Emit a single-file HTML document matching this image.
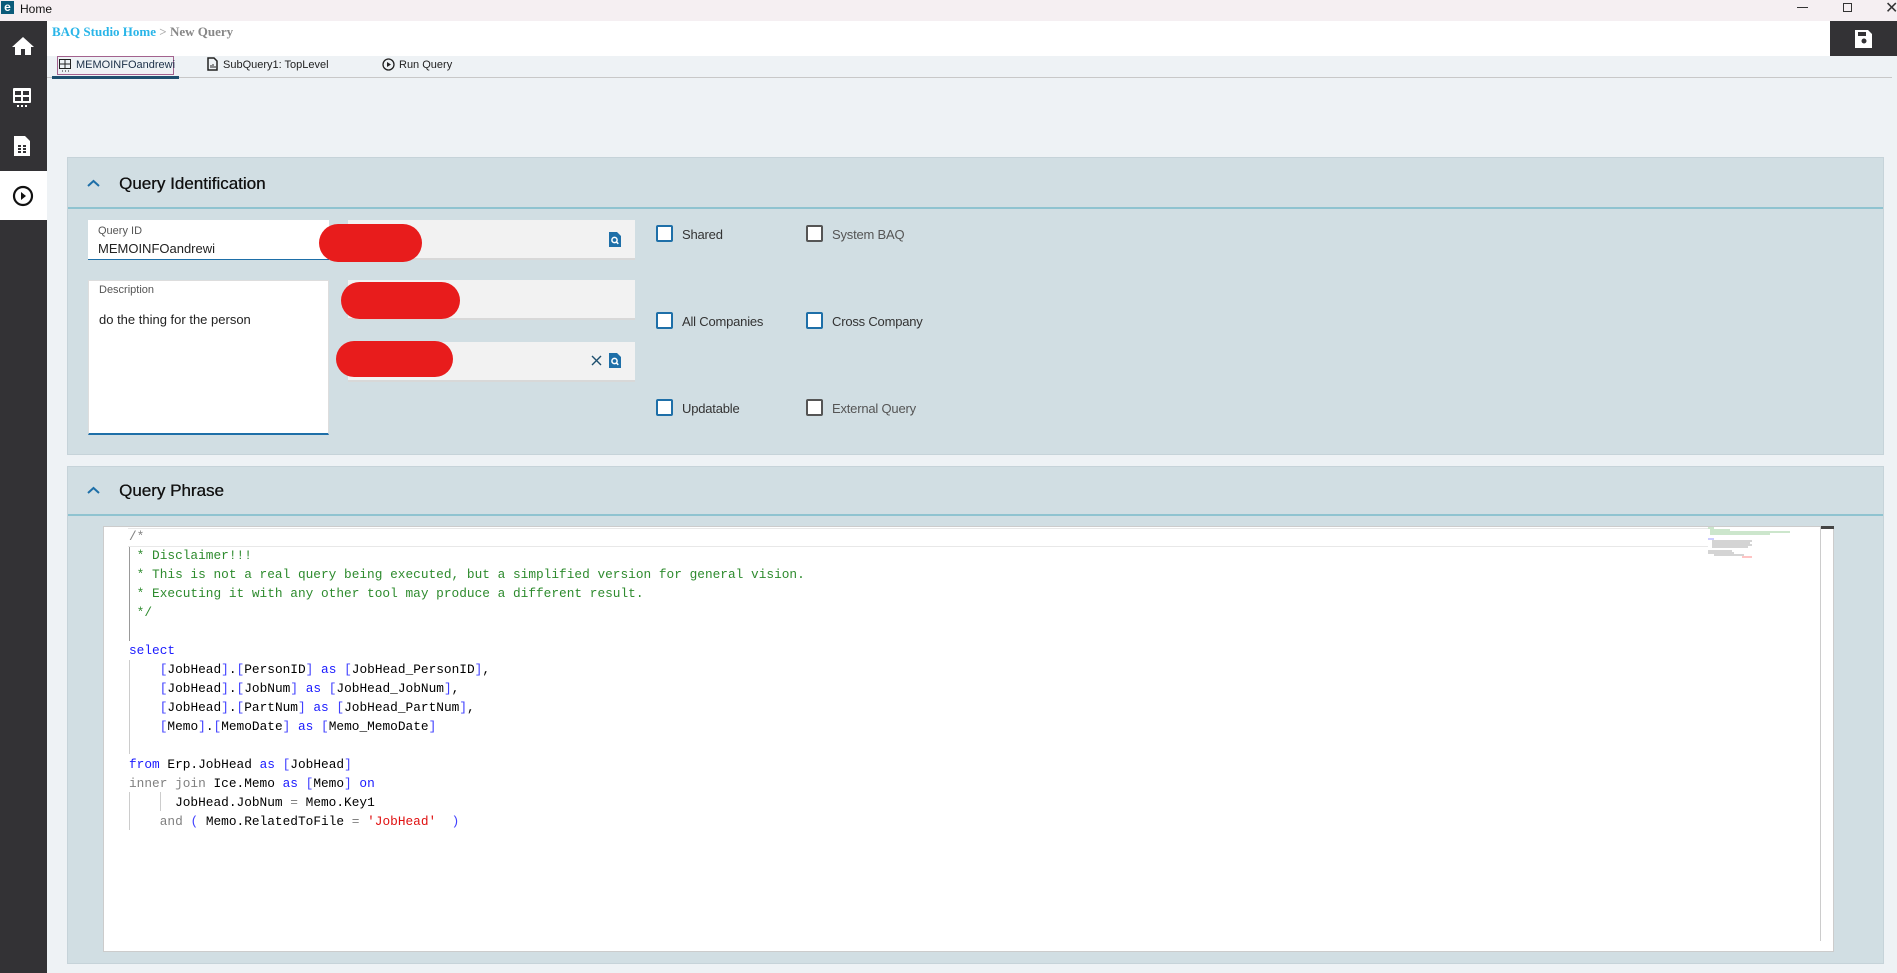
<!DOCTYPE html>
<html><head><meta charset="utf-8"><style>
*{box-sizing:border-box;margin:0;padding:0}
body{width:1897px;height:973px;overflow:hidden;background:#eef2f5;font-family:"Liberation Sans",sans-serif;position:relative}
.abs{position:absolute}
.tb{left:0;top:0;width:1897px;height:21px;background:#f5eff2}
.side{left:0;top:21px;width:47px;height:952px;background:#333235}
.code{font-family:"Liberation Mono",monospace;font-size:12.8px;white-space:pre;line-height:19px}
.cm{color:#2e8b2e}.kw{color:#1a1aff}.gr{color:#808080}.br{color:#4040ff}.st{color:#e01010}
.sec{background:#d1dee3;border:1px solid #c6d3d9}
.hdr{border-bottom:2px solid #8fc3d0}
.fld{background:#f2f2f2;border-bottom:2px solid #d8d8d8}
.cb{width:17px;height:17px;border:2px solid #1e6fa8;border-radius:2px;background:#fff}
.cbg{border-color:#555}
.lbl{font-size:13px;color:#333;letter-spacing:-0.2px}
.red{background:#e81c1c;border-radius:22px}
.ttl{font-size:17px;color:#111;text-shadow:0.3px 0 0 #111}
</style></head><body>
<div class="abs tb"></div>
<div class="abs" style="left:1px;top:1px;width:13px;height:13px;background:#0a5b7a;color:#fff;font-size:12px;font-weight:bold;line-height:12px;text-align:center">e</div>
<div class="abs" style="left:20px;top:2px;font-size:12px;color:#111">Home</div>
<div class="abs" style="left:1797px;top:7px;width:11px;height:1px;background:#333"></div>
<div class="abs" style="left:1843px;top:3px;width:9px;height:9px;border:1px solid #333"></div>
<div class="abs" style="left:1885px;top:-2px;font-size:16px;color:#333">✕</div>
<div class="abs side"></div>
<svg class="abs" style="left:11px;top:36px" width="24" height="20" viewBox="0 0 24 20"><path d="M12 1L1 11h3v8h6v-6h4v6h6v-8h3z" fill="#fff"/></svg>
<svg class="abs" style="left:12px;top:87px" width="22" height="22" viewBox="0 0 22 22"><rect x="1" y="1" width="18" height="15" rx="1" fill="#fff"/><rect x="3" y="4" width="6" height="4" fill="#333235"/><rect x="11" y="4" width="6" height="4" fill="#333235"/><rect x="3" y="10" width="6" height="4" fill="#333235"/><rect x="11" y="10" width="6" height="4" fill="#333235"/><rect x="5" y="18" width="2" height="2" fill="#fff"/><rect x="9" y="18" width="2" height="2" fill="#fff"/><rect x="13" y="18" width="2" height="2" fill="#fff"/></svg>
<svg class="abs" style="left:13px;top:135px" width="18" height="22" viewBox="0 0 18 22"><path d="M1 1h11l5 5v15H1z" fill="#fff"/><g fill="#333235"><rect x="5" y="10" width="3" height="2"/><rect x="10" y="10" width="3" height="2"/><rect x="5" y="13" width="3" height="2"/><rect x="10" y="13" width="3" height="2"/><rect x="5" y="16" width="3" height="2"/><rect x="10" y="16" width="3" height="2"/></g></svg>
<div class="abs" style="left:0;top:171px;width:47px;height:49px;background:#fff"></div>
<svg class="abs" style="left:12px;top:185px" width="22" height="22" viewBox="0 0 22 22"><circle cx="11" cy="11" r="9" fill="none" stroke="#111" stroke-width="2.2"/><path d="M9 7l5 4-5 4z" fill="#111"/></svg>
<div class="abs" style="left:47px;top:21px;width:1850px;height:35px;background:#fff"></div>
<div class="abs" style="left:52px;top:24px;font-family:'Liberation Serif',serif;font-weight:bold;font-size:13px"><span style="color:#29b5e8">BAQ Studio Home</span> <span style="color:#aaa">&gt;</span> <span style="color:#888">New Query</span></div>
<div class="abs" style="left:1830px;top:21px;width:67px;height:35px;background:#333235"></div>
<svg class="abs" style="left:1852px;top:28px" width="22" height="22" viewBox="0 0 22 22"><path d="M3 2h13l4 4v14H3z" fill="#fff"/><rect x="6" y="4" width="8" height="4" fill="#333235"/><circle cx="12" cy="13" r="2.5" fill="#333235"/></svg>
<div class="abs" style="left:47px;top:77px;width:1845px;height:1px;background:#c8c8c8"></div>
<div class="abs" style="left:52px;top:76px;width:127px;height:3px;background:#1d4f6e"></div>
<div class="abs" style="left:57px;top:56px;width:117px;height:19px;border:1px solid #a3628e"></div>
<svg class="abs" style="left:59px;top:59px" width="13" height="14" viewBox="0 0 13 14"><rect x="0.5" y="0.5" width="11" height="9" fill="none" stroke="#222"/><path d="M0 5h12M6 0v10" stroke="#222"/><path d="M3 12h1M6 12h1M9 12h1" stroke="#222"/></svg>
<div class="abs" style="left:76px;top:59px;font-size:11px;color:#1c3048">MEMOINFOandrewi</div>
<svg class="abs" style="left:207px;top:57px" width="11" height="14" viewBox="0 0 11 14"><path d="M1 1h6l3 3v9H1z" fill="none" stroke="#222" stroke-width="1.5"/><path d="M4 11V8M6 11V7M8 11V9" stroke="#222"/></svg>
<div class="abs" style="left:223px;top:59px;font-size:11px;color:#222">SubQuery1: TopLevel</div>
<svg class="abs" style="left:382px;top:58px" width="13" height="13" viewBox="0 0 13 13"><circle cx="6.5" cy="6.5" r="5.5" fill="none" stroke="#222" stroke-width="1.3"/><path d="M5 4l4 2.5-4 2.5z" fill="#222"/></svg>
<div class="abs" style="left:399px;top:59px;font-size:11px;color:#222">Run Query</div>

<div class="abs sec" style="left:67px;top:157px;width:1817px;height:298px"></div>
<div class="abs hdr" style="left:68px;top:158px;width:1815px;height:51px"></div>
<svg class="abs" style="left:87px;top:179px" width="13" height="9" viewBox="0 0 13 9"><path d="M1 7l5.5-5 5.5 5" fill="none" stroke="#1e6fa8" stroke-width="2"/></svg>
<div class="abs ttl" style="left:119px;top:174px">Query Identification</div>
<div class="abs" style="left:88px;top:220px;width:241px;height:40px;background:#fff;border-bottom:1.5px solid #1e6fa8"></div>
<div class="abs" style="left:98px;top:225px;font-size:11px;color:#555">Query ID</div>
<div class="abs" style="left:98px;top:241px;font-size:13px;color:#222">MEMOINFOandrewi</div>
<div class="abs fld" style="left:348px;top:220px;width:287px;height:40px"></div>
<div class="abs fld" style="left:348px;top:280px;width:287px;height:40px"></div>
<div class="abs fld" style="left:348px;top:342px;width:287px;height:40px"></div>
<svg class="abs" style="left:609px;top:232px" width="12" height="15" viewBox="0 0 12 15"><path d="M0 0h8l4 4v11H0z" fill="#1e6fa8"/><circle cx="5.5" cy="8" r="2.6" fill="none" stroke="#fff" stroke-width="1.5"/><path d="M7.3 9.8l2 2" stroke="#fff" stroke-width="1.5"/></svg>
<svg class="abs" style="left:609px;top:353px" width="12" height="15" viewBox="0 0 12 15"><path d="M0 0h8l4 4v11H0z" fill="#1e6fa8"/><circle cx="5.5" cy="8" r="2.6" fill="none" stroke="#fff" stroke-width="1.5"/><path d="M7.3 9.8l2 2" stroke="#fff" stroke-width="1.5"/></svg>
<svg class="abs" style="left:591px;top:355px" width="11" height="11" viewBox="0 0 11 11"><path d="M1 1l9 9M10 1l-9 9" stroke="#1e4f6e" stroke-width="1.4"/></svg>
<div class="abs" style="left:88px;top:280px;width:241px;height:155px;background:#fff;border:1px solid #ddd;border-bottom:2px solid #1e6fa8"></div>
<div class="abs" style="left:99px;top:284px;font-size:11px;color:#555">Description</div>
<div class="abs" style="left:99px;top:312px;font-size:13px;color:#222">do the thing for the person</div>
<div class="abs red" style="left:319px;top:224px;width:103px;height:38px"></div>
<div class="abs red" style="left:341px;top:282px;width:119px;height:37px"></div>
<div class="abs red" style="left:336px;top:341px;width:117px;height:36px"></div>
<div class="abs cb" style="left:656px;top:225px"></div><div class="abs lbl" style="left:682px;top:227px">Shared</div>
<div class="abs cb cbg" style="left:806px;top:225px"></div><div class="abs lbl" style="left:832px;top:227px;color:#555">System BAQ</div>
<div class="abs cb" style="left:656px;top:312px"></div><div class="abs lbl" style="left:682px;top:314px">All Companies</div>
<div class="abs cb" style="left:806px;top:312px"></div><div class="abs lbl" style="left:832px;top:314px">Cross Company</div>
<div class="abs cb" style="left:656px;top:399px"></div><div class="abs lbl" style="left:682px;top:401px">Updatable</div>
<div class="abs cb cbg" style="left:806px;top:399px"></div><div class="abs lbl" style="left:832px;top:401px;color:#555">External Query</div>

<div class="abs sec" style="left:67px;top:466px;width:1817px;height:498px"></div>
<div class="abs hdr" style="left:68px;top:467px;width:1815px;height:49px"></div>
<svg class="abs" style="left:87px;top:486px" width="13" height="9" viewBox="0 0 13 9"><path d="M1 7l5.5-5 5.5 5" fill="none" stroke="#1e6fa8" stroke-width="2"/></svg>
<div class="abs ttl" style="left:119px;top:481px">Query Phrase</div>
<div class="abs" style="left:103px;top:526px;width:1731px;height:426px;background:#fff;border:1px solid #ccc"></div>
<div class="abs" style="left:128px;top:528px;width:1580px;height:19px;border:1.5px solid #e8e8e8;border-left:none;border-right:none"></div>
<div class="abs" style="left:1820px;top:526px;width:1px;height:415px;background:#ccc"></div>
<div class="abs" style="left:1821px;top:526px;width:13px;height:3px;background:#444"></div>
<div class="abs" style="left:129px;top:547px;width:1px;height:94px;background:#999"></div>
<div class="abs" style="left:129px;top:660px;width:1px;height:94px;background:#ccc"></div>
<div class="abs" style="left:129px;top:792px;width:1px;height:38px;background:#ccc"></div>
<div class="abs" style="left:160px;top:792px;width:1px;height:19px;background:#ccc"></div>
<div class="abs code" style="left:129px;top:527px"><span class="gr">/*</span>
<span class="cm"> * Disclaimer!!!
 * This is not a real query being executed, but a simplified version for general vision.
 * Executing it with any other tool may produce a different result.
 */</span>

<span class="kw">select</span>
    <span class="br">[</span>JobHead<span class="br">]</span>.<span class="br">[</span>PersonID<span class="br">]</span> <span class="kw">as</span> <span class="br">[</span>JobHead_PersonID<span class="br">]</span>,
    <span class="br">[</span>JobHead<span class="br">]</span>.<span class="br">[</span>JobNum<span class="br">]</span> <span class="kw">as</span> <span class="br">[</span>JobHead_JobNum<span class="br">]</span>,
    <span class="br">[</span>JobHead<span class="br">]</span>.<span class="br">[</span>PartNum<span class="br">]</span> <span class="kw">as</span> <span class="br">[</span>JobHead_PartNum<span class="br">]</span>,
    <span class="br">[</span>Memo<span class="br">]</span>.<span class="br">[</span>MemoDate<span class="br">]</span> <span class="kw">as</span> <span class="br">[</span>Memo_MemoDate<span class="br">]</span>

<span class="kw">from</span> Erp.JobHead <span class="kw">as</span> <span class="br">[</span>JobHead<span class="br">]</span>
<span class="gr">inner join</span> Ice.Memo <span class="kw">as</span> <span class="br">[</span>Memo<span class="br">]</span> <span class="kw">on</span>
      JobHead.JobNum <span class="gr">=</span> Memo.Key1
    <span class="gr">and</span> <span class="br">(</span> Memo.RelatedToFile <span class="gr">=</span> <span class="st">'JobHead'</span>  <span class="br">)</span></div>
<svg class="abs" style="left:1708px;top:527px" width="90" height="36" viewBox="0 0 90 36"><g stroke-width="1"><path d="M0 1h6M2 3h20M2 5h80M2 7h60" stroke="#9c9"/><path d="M0 12h6" stroke="#99f"/><path d="M4 14h40M4 16h38M4 18h40M4 20h36" stroke="#aaa"/><path d="M0 24h24M0 26h26M6 28h30" stroke="#aaa"/><path d="M34 30h10" stroke="#f88"/></g></svg>
</body></html>
